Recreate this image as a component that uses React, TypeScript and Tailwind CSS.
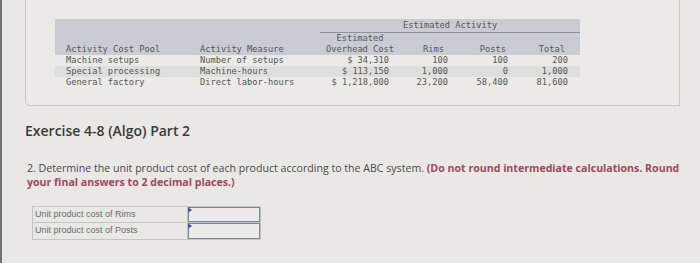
import React from 'react';

const rows = [
  { pool: 'Machine setups', measure: 'Number of setups', cost: '$ 34,310', rims: '100', posts: '100', total: '200', shade: false },
  { pool: 'Special processing', measure: 'Machine-hours', cost: '$ 113,150', rims: '1,000', posts: '0', total: '1,000', shade: true },
  { pool: 'General factory', measure: 'Direct labor-hours', cost: '$ 1,218,000', rims: '23,200', posts: '58,400', total: '81,600', shade: false },
];

const cols = 'grid grid-cols-[135px_130px_80px_55px_60px_65px]';

const AnswerRow: React.FC<{ label: string; last?: boolean }> = ({ label, last }) => (
  <div className={`flex h-[16px] ${last ? '' : 'border-b border-[#c4c4c4]'}`}>
    <div className="w-[155px] border-r border-[#c4c4c4] pl-[2px] text-[9px] leading-[15px] text-[#6a6a6a]">{label}</div>
    <div className="relative w-[72px] border-[1.5px] border-[#76859a] bg-[#ecebe9]">
      <span className="absolute left-[-1px] top-[-1px] h-0 w-0 border-y-[3px] border-l-[4px] border-y-transparent border-l-[#3b5fa0]" />
    </div>
  </div>
);

export default function App() {
  return (
    <div className="flex h-[263px] w-[700px] overflow-hidden bg-[#e9e8e5]">
      <div className="w-[2px] bg-[#727272]" />
      <div className="flex-1 pl-[23px]">
        {/* data box */}
        <div className="-mt-[4px] h-[110px] w-[655px] rounded-bl-[5px] border border-[#c6c6c6] bg-[#ebeae7] pl-[29px] pt-[22px] font-['DejaVu_Sans_Mono',monospace] text-[8.7px] text-[#555]">
          <div className="w-[525px]">
            <div className="bg-[#c9ccd3]">
              <div className={`${cols} h-[14px]`}>
                <div />
                <div />
                <div className="col-span-4 border-b border-[#8f9399] pl-[83px] leading-[13px]">Estimated Activity</div>
              </div>
              <div className={`${cols} h-[11px] leading-[11px]`}>
                <div />
                <div />
                <div className="text-center">Estimated</div>
              </div>
              <div className={`${cols} h-[11px] leading-[11px]`}>
                <div className="pl-[11px]">Activity Cost Pool</div>
                <div className="pl-[10px]">Activity Measure</div>
                <div className="text-center">Overhead Cost</div>
                <div className="pr-[11px] text-right">Rims</div>
                <div className="pr-[9px] text-right">Posts</div>
                <div className="pr-[15px] text-right">Total</div>
              </div>
            </div>
            {rows.map((r) => (
              <div key={r.pool} className={`${cols} h-[11px] leading-[11px] ${r.shade ? 'bg-[#dededc]' : ''}`}>
                <div className="pl-[11px]">{r.pool}</div>
                <div className="pl-[10px]">{r.measure}</div>
                <div className="pr-[11px] text-right">{r.cost}</div>
                <div className="pr-[7px] text-right">{r.rims}</div>
                <div className="pr-[7px] text-right">{r.posts}</div>
                <div className="pr-[12px] text-right">{r.total}</div>
              </div>
            ))}
          </div>
        </div>

        <h2 className="mt-[16px] font-['Open_Sans',sans-serif] text-[14px] font-semibold leading-[18px] text-[#3a3a3a]">
          Exercise 4-8 (Algo) Part 2
        </h2>

        <div className="mt-[21px] pl-[2px] font-['Open_Sans',sans-serif] text-[10.6px] leading-[14px] text-[#4a4a4a]">
          <p className="whitespace-nowrap">
            2. Determine the unit product cost of each product according to the ABC system.{' '}
            <span className="font-bold text-[#9e4760]">(Do not round intermediate calculations. Round</span>
          </p>
          <p className="font-bold text-[#9e4760]">your final answers to 2 decimal places.)</p>
        </div>

        <div className="ml-[7px] mt-[17px] w-[229px] border border-[#c4c4c4] font-['Liberation_Sans',Arial,sans-serif]">
          <AnswerRow label="Unit product cost of Rims" />
          <AnswerRow label="Unit product cost of Posts" last />
        </div>
      </div>
    </div>
  );
}
